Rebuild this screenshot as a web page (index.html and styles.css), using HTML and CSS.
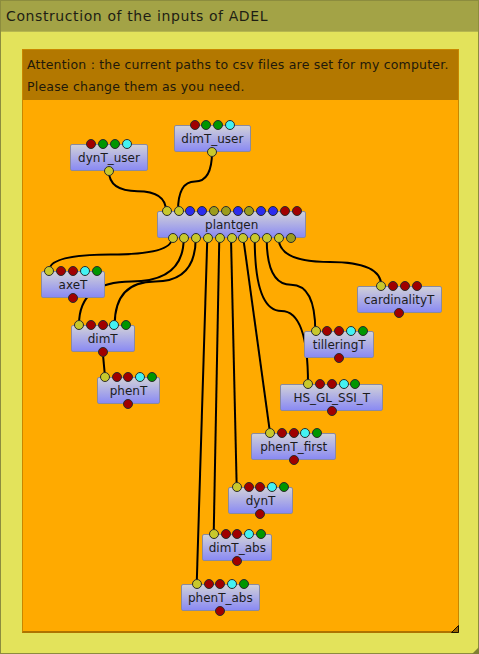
FILE: index.html
```html
<!DOCTYPE html>
<html>
<head>
<meta charset="utf-8">
<link rel="stylesheet" href="styles.css">
</head>
<body>
<div class="window">
  <div class="titlebar">Construction of the inputs of ADEL</div>
  <div class="content">
    <div class="panel">
      <div class="attention">Attention : the current paths to csv files are set for my computer.<br>Please change them as you need.</div>
      <div class="canvas">
        <svg class="edges" width="435" height="531" viewBox="23 100 435 531">
          <g fill="none" stroke="#000" stroke-width="2">
            <path d="M109 171.3 Q109 191.15 137.5 191.15 Q166 191.15 166 211"/>
            <path d="M212 152 Q212 181.5 195 181.5 Q178 181.5 178 211"/>
            <path d="M172 238.3 Q172 254.5 110.5 254.5 Q49 254.5 49 270.7"/>
            <path d="M183.7 238.3 Q183.7 281.5 131.35 281.5 Q79 281.5 79 324.7"/>
            <path d="M195.7 238.3 Q195.7 281.5 155.2 281.5 Q114.7 281.5 114.7 324.7"/>
            <path d="M207.3 238.3 L196.7 584"/>
            <path d="M219.3 238.3 L213.7 534"/>
            <path d="M231 238.3 L236.7 487.3"/>
            <path d="M243.3 238.3 L270 432.7"/>
            <path d="M254.7 238.3 Q254.7 311 281.35 311 Q308 311 308 383.7"/>
            <path d="M266.7 238.3 Q266.7 284.8 291 284.8 Q315.3 284.8 315.3 331.3"/>
            <path d="M278.7 238.3 Q278.7 262 330 262 Q381.3 262 381.3 285.7"/>
            <path d="M102.7 351.7 L105 376.7"/>
          </g>
        </svg>

        <div class="node n-dynt-user">dynT_user
          <div class="ports in"><span class="p r"></span><span class="p g"></span><span class="p g"></span><span class="p c"></span></div>
          <div class="ports out"><span class="p y"></span></div>
        </div>
        <div class="node n-dimt-user">dimT_user
          <div class="ports in"><span class="p r"></span><span class="p g"></span><span class="p g"></span><span class="p c"></span></div>
          <div class="ports out"><span class="p y"></span></div>
        </div>
        <div class="node n-plantgen">plantgen
          <div class="ports in"><span class="p y"></span><span class="p y"></span><span class="p b"></span><span class="p b"></span><span class="p o"></span><span class="p o"></span><span class="p b"></span><span class="p o"></span><span class="p b"></span><span class="p b"></span><span class="p r"></span><span class="p r"></span></div>
          <div class="ports out"><span class="p y"></span><span class="p y"></span><span class="p y"></span><span class="p y"></span><span class="p y"></span><span class="p y"></span><span class="p y"></span><span class="p y"></span><span class="p y"></span><span class="p y"></span><span class="p o"></span></div>
        </div>
        <div class="node n-axet">axeT
          <div class="ports in"><span class="p y"></span><span class="p r"></span><span class="p r"></span><span class="p c"></span><span class="p g"></span></div>
          <div class="ports out"><span class="p r"></span></div>
        </div>
        <div class="node n-dimt">dimT
          <div class="ports in"><span class="p y"></span><span class="p r"></span><span class="p r"></span><span class="p c"></span><span class="p g"></span></div>
          <div class="ports out"><span class="p r"></span></div>
        </div>
        <div class="node n-phent">phenT
          <div class="ports in"><span class="p y"></span><span class="p r"></span><span class="p r"></span><span class="p c"></span><span class="p g"></span></div>
          <div class="ports out"><span class="p r"></span></div>
        </div>
        <div class="node n-card">cardinalityT
          <div class="ports in"><span class="p y"></span><span class="p r"></span><span class="p r"></span><span class="p r"></span></div>
          <div class="ports out"><span class="p r"></span></div>
        </div>
        <div class="node n-till">tilleringT
          <div class="ports in"><span class="p y"></span><span class="p r"></span><span class="p r"></span><span class="p c"></span><span class="p g"></span></div>
          <div class="ports out"><span class="p r"></span></div>
        </div>
        <div class="node n-hs">HS_GL_SSI_T
          <div class="ports in"><span class="p y"></span><span class="p r"></span><span class="p r"></span><span class="p c"></span><span class="p g"></span></div>
          <div class="ports out"><span class="p r"></span></div>
        </div>
        <div class="node n-phent-first">phenT_first
          <div class="ports in"><span class="p y"></span><span class="p r"></span><span class="p r"></span><span class="p c"></span><span class="p g"></span></div>
          <div class="ports out"><span class="p r"></span></div>
        </div>
        <div class="node n-dynt">dynT
          <div class="ports in"><span class="p y"></span><span class="p r"></span><span class="p r"></span><span class="p c"></span><span class="p g"></span></div>
          <div class="ports out"><span class="p r"></span></div>
        </div>
        <div class="node n-dimt-abs">dimT_abs
          <div class="ports in"><span class="p y"></span><span class="p r"></span><span class="p r"></span><span class="p c"></span><span class="p g"></span></div>
          <div class="ports out"><span class="p r"></span></div>
        </div>
        <div class="node n-phent-abs">phenT_abs
          <div class="ports in"><span class="p y"></span><span class="p r"></span><span class="p r"></span><span class="p c"></span><span class="p g"></span></div>
          <div class="ports out"><span class="p r"></span></div>
        </div>
      </div>
      <svg class="grip" width="8" height="8" viewBox="0 0 8 8"><path d="M7.5 0.5 L7.5 7.5 L0.5 7.5 Z" fill="#9a6400" stroke="#1a1000" stroke-width="1"/></svg>
    </div>
  </div>
  <svg class="wgrip" width="7" height="7" viewBox="0 0 7 7"><path d="M7 0 L7 7 L0 7 Z" fill="#7e7e34"/></svg>
</div>
</body>
</html>
```

FILE: styles.css
```css
* { box-sizing: border-box; }
html, body { margin: 0; padding: 0; }
body {
  width: 479px;
  height: 654px;
  overflow: hidden;
  font-family: "DejaVu Sans", sans-serif;
  color: #222;
}
.window {
  width: 479px;
  height: 654px;
  border: 1px solid #8c8c3e;
  background: #e3e35b;
  display: flex;
  flex-direction: column;
  position: relative;
}
.titlebar {
  flex: none;
  height: 31px;
  background: #a3a346;
  border-bottom: 1px solid #b6b650;
  padding: 1px 0 0 5px;
  font-size: 14px;
  letter-spacing: 0.6px;
  line-height: 29px;
  color: #1e1e14;
}
.content {
  flex: 1;
  display: flex;
  padding: 17px 19px 20px 21px;
}
.panel {
  flex: 1;
  display: flex;
  flex-direction: column;
  position: relative;
  background: #ffaa00;
  border: 1px solid #c98700;
  border-bottom: 2px solid #ae7300;
}
.attention {
  flex: none;
  background: #b37800;
  padding: 4px 4px 2px;
  font-size: 12.5px;
  letter-spacing: 0.2px;
  line-height: 22px;
  white-space: nowrap;
  color: #21190a;
}
.canvas {
  flex: 1;
  position: relative;
}
.edges {
  position: absolute;
  left: 0;
  top: 0;
}
.node {
  position: absolute;
  height: 27px;
  border: 1px solid #8a8a9e;
  border-radius: 2px;
  background: linear-gradient(#d0d0d8, #8a8af3);
  font-size: 12px;
  line-height: 26px;
  text-align: center;
  color: #1c1c1c;
  white-space: nowrap;
}
.ports {
  position: absolute;
  left: 0;
  right: 0;
  display: flex;
  justify-content: center;
  gap: 1.8px;
}
.ports.in { top: -6px; }
.ports.out { bottom: -6px; }
.p {
  width: 10px;
  height: 10px;
  border-radius: 50%;
  border: 1px solid #2b2b2b;
  flex: none;
}
.p.y { background: #c8c82c; }
.p.o { background: #9c9c1c; }
.p.r { background: #a00000; }
.p.g { background: #009600; }
.p.c { background: #44f2f2; }
.p.b { background: #2c2cee; }

.n-dynt-user { left: 47.3px; top: 43.7px; width: 77.4px; }
.n-dimt-user { left: 151px; top: 24.7px; width: 76.7px; }
.n-plantgen { left: 134.3px; top: 111px; width: 148.7px; }
.n-axet { left: 18px; top: 170.7px; width: 64px; }
.n-dimt { left: 47.7px; top: 224.7px; width: 64px; }
.n-phent { left: 73.7px; top: 276.7px; width: 63.6px; }
.n-card { left: 333.7px; top: 185.7px; width: 85px; }
.n-till { left: 281.3px; top: 231.3px; width: 69.7px; }
.n-hs { left: 257.3px; top: 283.7px; width: 103px; }
.n-phent-first { left: 228.3px; top: 332.7px; width: 84.7px; }
.n-dynt { left: 205.3px; top: 387.3px; width: 64.4px; }
.n-dimt-abs { left: 179.3px; top: 434px; width: 70px; }
.n-phent-abs { left: 157.7px; top: 484px; width: 79.3px; }

.grip {
  position: absolute;
  right: -1px;
  bottom: -2px;
}
.wgrip {
  position: absolute;
  right: -1px;
  bottom: -1px;
}
```
